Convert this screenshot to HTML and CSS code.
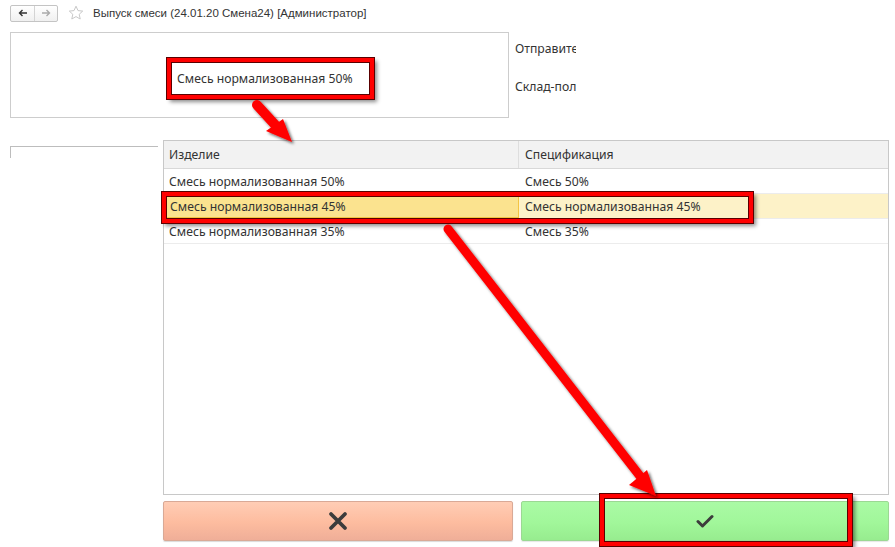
FILE: index.html
```html
<!DOCTYPE html>
<html lang="ru">
<head>
<meta charset="utf-8">
<title>Выпуск смеси</title>
<link rel="stylesheet" href="styles.css">
</head>
<body>
<div class="page">
  <div class="toolbar">
    <div class="nav">
      <span class="nav-btn"><svg width="10" height="8" viewBox="0 0 10 8"><path d="M9 4H2M4.5 1L1.5 4l3 3" fill="none" stroke="#333" stroke-width="1.4"/></svg></span>
      <span class="nav-btn"><svg width="10" height="8" viewBox="0 0 10 8"><path d="M1 4h7M5.5 1l3 3-3 3" fill="none" stroke="#aaa" stroke-width="1.4"/></svg></span>
    </div>
    <svg class="star" width="16" height="16" viewBox="0 0 16 16"><path d="M8 1.2l2 4.4 4.7.5-3.5 3.2 1 4.7L8 11.6 3.8 14l1-4.7L1.3 6.1 6 5.6z" fill="none" stroke="#c8c8c8" stroke-width="1"/></svg>
    <span class="title">Выпуск смеси (24.01.20 Смена24) [Администратор]</span>
  </div>

  <div class="top">
    <div class="form-box">
      <div class="mark mark-1">Смесь нормализованная 50%</div>
    </div>
    <div class="side">
      <div class="side-label">Отправите.</div>
      <div class="side-label">Склад-полу</div>
    </div>
  </div>

  <div class="middle">
    <div class="left-panel"></div>
    <div class="work">
      <div class="table">
        <div class="row head">
          <div class="cell c1">Изделие</div>
          <div class="cell c2">Спецификация</div>
        </div>
        <div class="row">
          <div class="cell c1">Смесь нормализованная 50%</div>
          <div class="cell c2">Смесь 50%</div>
        </div>
        <div class="row selected">
          <div class="cell c1 current">Смесь нормализованная 45%</div>
          <div class="cell c2">Смесь нормализованная 45%</div>
        </div>
        <div class="row">
          <div class="cell c1">Смесь нормализованная 35%</div>
          <div class="cell c2">Смесь 35%</div>
        </div>
      </div>
      <div class="buttons">
        <div class="btn cancel"><svg width="22" height="22" viewBox="0 0 22 22"><path d="M4 4l14 14M18 4L4 18" stroke="#3c3c3c" stroke-width="3.8" stroke-linecap="round"/></svg></div>
        <div class="btn ok"><svg width="18" height="14" viewBox="0 0 18 14"><path d="M2 7.5l4.5 4.5L16 2.5" fill="none" stroke="#3c3c3c" stroke-width="3" stroke-linecap="round" stroke-linejoin="round"/></svg></div>
      </div>
    </div>
  </div>

  <div class="mark mark-2"></div>
  <div class="mark mark-3"></div>

  <svg class="arrows" width="895" height="547" viewBox="0 0 895 547">
    <defs>
      <filter id="sh" x="-20%" y="-20%" width="140%" height="140%">
        <feDropShadow dx="2" dy="2" stdDeviation="1.6" flood-color="#000" flood-opacity="0.6"/>
      </filter>
    </defs>
    <g filter="url(#sh)" fill="#ff0000">
      <path d="M257 105L278 128" stroke="#ff0000" stroke-width="10" stroke-linecap="round"/>
      <path d="M292 142L266 131L283 119Z"/>
      <path d="M448 229L643 480" stroke="#ff0000" stroke-width="9" stroke-linecap="round"/>
      <path d="M656 496L629 485L647 470Z"/>
    </g>
  </svg>
</div>
</body>
</html>
```

FILE: styles.css
```css
* { box-sizing: border-box; }
html, body { margin: 0; padding: 0; background: #fff; }
body {
  font-family: "Noto Sans", "Open Sans", sans-serif;
  font-size: 12.2px;
  color: #333;
}
.page {
  position: relative;
  width: 895px;
  height: 547px;
  overflow: hidden;
}
.toolbar {
  height: 32px;
  display: flex;
  align-items: center;
  padding-left: 10px;
  padding-bottom: 6px;
}
.nav {
  display: flex;
  height: 17px;
  border: 1px solid #c4c4c4;
  border-radius: 2px;
  background: linear-gradient(#fff, #f0f0f0);
}
.nav-btn {
  width: 23px;
  display: flex;
  align-items: center;
  justify-content: center;
}
.nav-btn + .nav-btn { border-left: 1px solid #d4d4d4; }
.star { margin-left: 10px; }
.title {
  margin-left: 9px;
  font-family: "Liberation Sans", Arial, sans-serif;
  font-size: 11.5px;
  color: #333;
}
.top {
  display: flex;
  height: 86px;
}
.form-box {
  position: relative;
  margin-left: 10px;
  width: 499px;
  height: 86px;
  border: 1px solid #cdcdcd;
}
.side {
  padding-left: 6px;
  padding-top: 8px;
  width: 67px;
  overflow: hidden;
  white-space: nowrap;
}
.side-label {
  height: 38px;
  color: #333;
  overflow: hidden;
}
.middle {
  display: flex;
  margin-top: 22px;
}
.left-panel {
  margin-left: 10px;
  margin-top: 6px;
  width: 148px;
  height: 12px;
  border-top: 1px solid #bdbdbd;
  border-left: 1px solid #bdbdbd;
}
.work {
  margin-left: 5px;
  width: 726px;
}
.table {
  height: 355px;
  border: 1px solid #c8c8c8;
}
.row {
  display: flex;
  height: 25px;
  border-bottom: 1px solid #ececec;
  align-items: stretch;
}
.row.head {
  height: 28px;
  background: #f2f2f2;
  border-bottom: 1px solid #d8d8d8;
}
.cell {
  display: flex;
  align-items: center;
  padding-left: 5px;
  white-space: nowrap;
}
.c1 { width: 355px; }
.c2 { flex: 1; padding-left: 6px; }
.head .c1 { border-right: 1px solid #dedede; }
.row.selected { background: #fdf2c8; }
.row.selected .current {
  background: #fbe38f;
  border: 1px solid #f3c443;
  padding-left: 4px;
  margin-left: 1px;
  width: 354px;
}
.buttons {
  display: flex;
  gap: 8px;
  margin-top: 6px;
}
.btn {
  height: 40px;
  display: flex;
  align-items: center;
  justify-content: center;
  border-radius: 2px;
}
.cancel {
  width: 350px;
  border: 1px solid #d9a996;
  background: linear-gradient(#ffcdb5, #fdbc9f 55%, #efae98);
  box-shadow: 0 1px 1px rgba(0,0,0,0.15);
}
.ok {
  width: 368px;
  border: 1px solid #9bd893;
  background: linear-gradient(#aafaa5, #a1f79a 55%, #97ec8f);
  box-shadow: 0 1px 1px rgba(0,0,0,0.1);
}
.mark {
  position: absolute;
  border: 4px solid #ff0000;
  box-shadow: 0 0 0 1px #5a0000, inset 0 0 0 1px #5a0000, 3px 3px 4px rgba(0,0,0,0.45);
}
.mark-1 {
  left: 156px;
  top: 25px;
  width: 207px;
  height: 41px;
  display: flex;
  align-items: center;
  padding-left: 6px;
  color: #333;
}
.mark-2 {
  left: 162px;
  top: 192px;
  width: 591px;
  height: 31px;
}
.mark-3 {
  left: 600px;
  top: 494px;
  width: 252px;
  height: 52px;
}
.arrows {
  position: absolute;
  left: 0;
  top: 0;
  pointer-events: none;
}
```
